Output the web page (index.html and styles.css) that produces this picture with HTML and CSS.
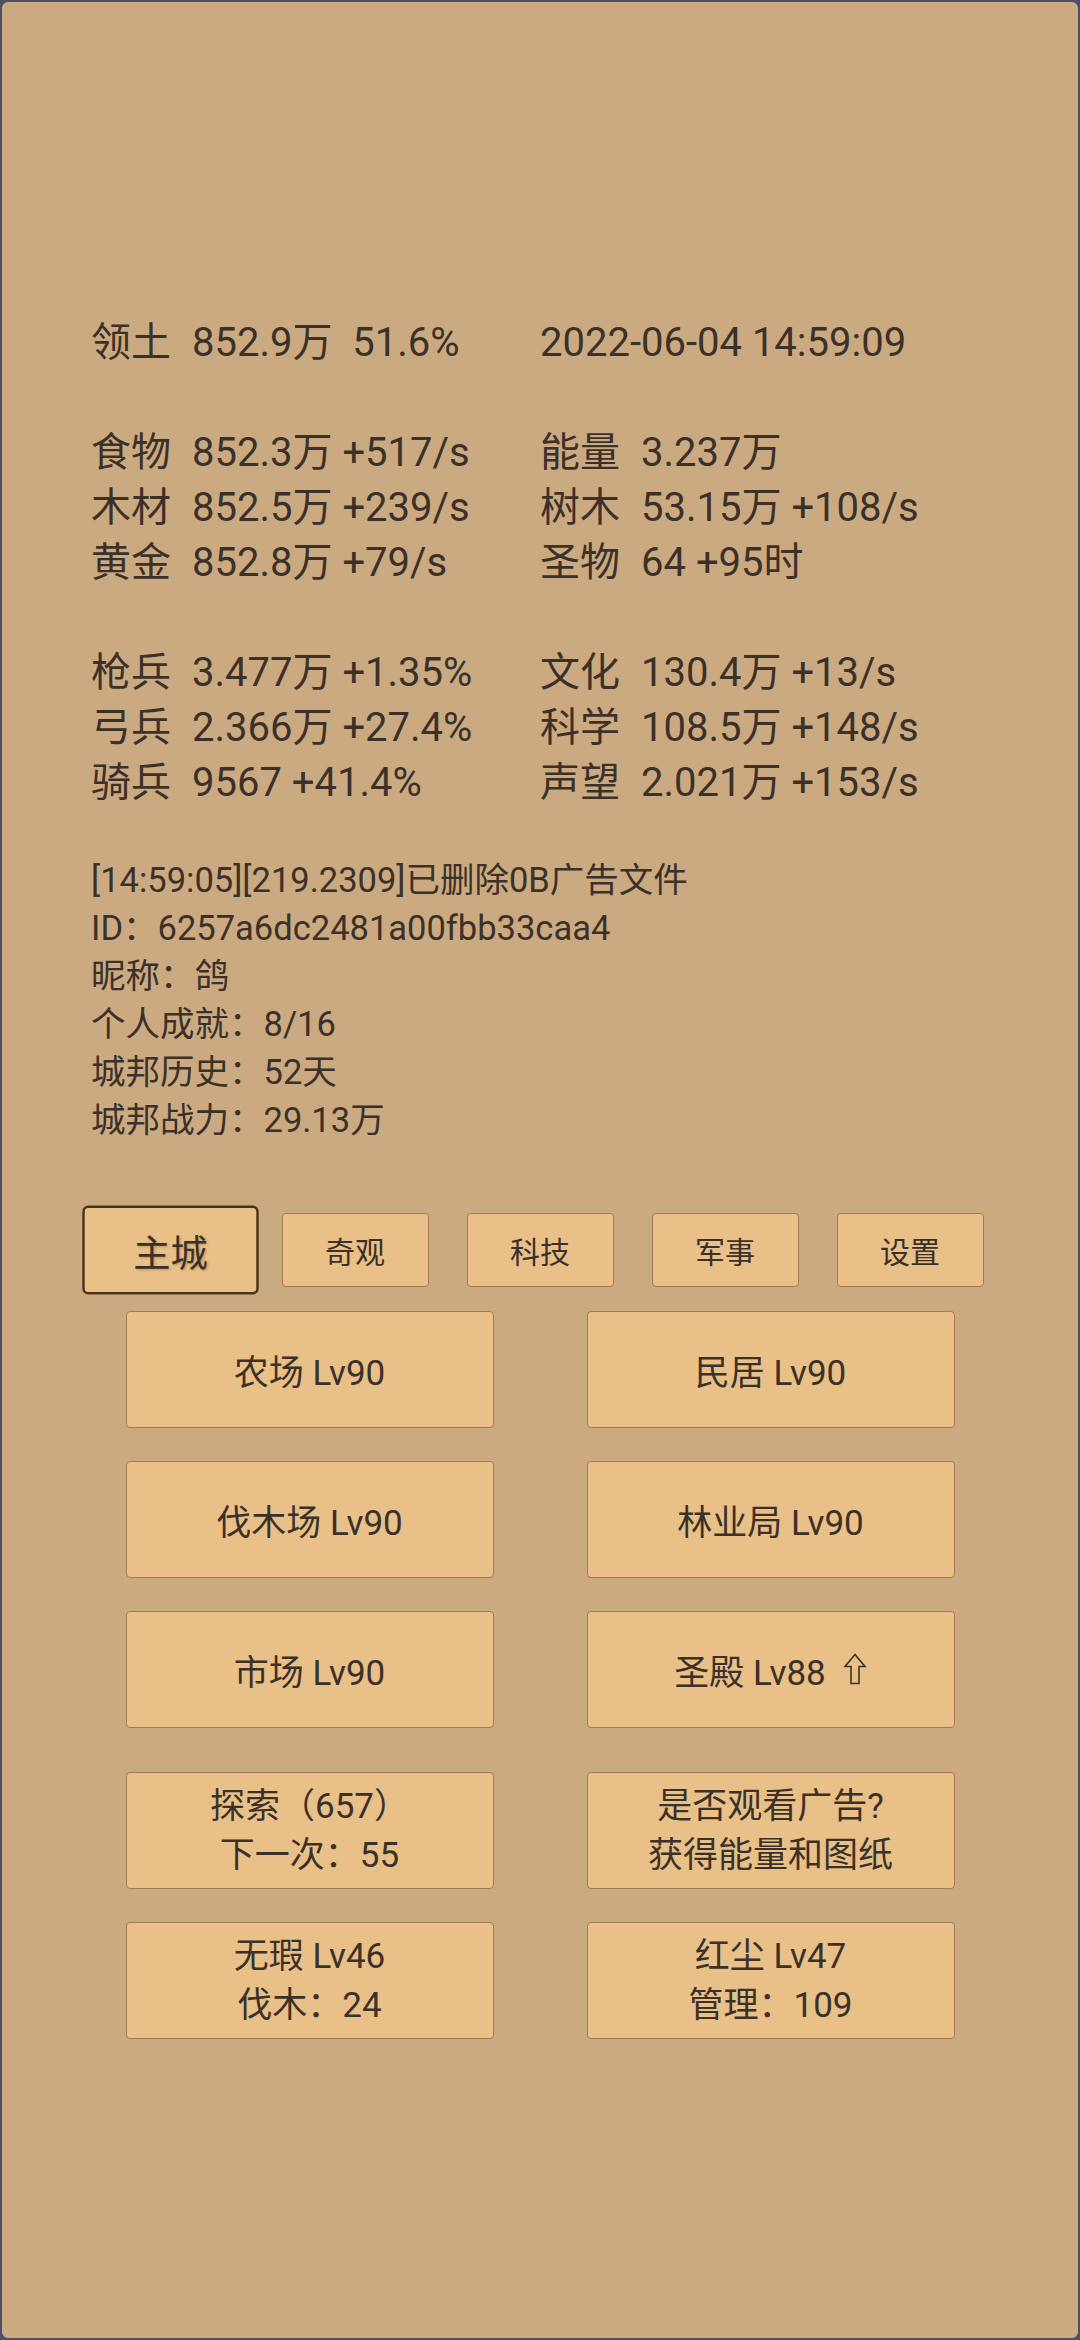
FILE: index.html
```html
<!DOCTYPE html>
<html lang="zh-CN">
<head>
  <meta charset="UTF-8">
  <title>城邦</title>
  <link rel="stylesheet" href="styles.css">
</head>
<body>
<div class="screen">
  <!--资源统计-->
  <div class="stats">
    <div class="group">
      <div class="cell"><span class="k">领土</span><span class="v">852.9万  51.6%</span></div>
      <div class="cell"><span class="v">2022-06-04 14:59:09</span></div>
    </div>
    <div class="group">
      <div class="cell"><span class="k">食物</span><span class="v">852.3万 +517/s</span></div>
      <div class="cell"><span class="k">能量</span><span class="v">3.237万</span></div>
      <div class="cell"><span class="k">木材</span><span class="v">852.5万 +239/s</span></div>
      <div class="cell"><span class="k">树木</span><span class="v">53.15万 +108/s</span></div>
      <div class="cell"><span class="k">黄金</span><span class="v">852.8万 +79/s</span></div>
      <div class="cell"><span class="k">圣物</span><span class="v">64 +95时</span></div>
    </div>
    <div class="group">
      <div class="cell"><span class="k">枪兵</span><span class="v">3.477万 +1.35%</span></div>
      <div class="cell"><span class="k">文化</span><span class="v">130.4万 +13/s</span></div>
      <div class="cell"><span class="k">弓兵</span><span class="v">2.366万 +27.4%</span></div>
      <div class="cell"><span class="k">科学</span><span class="v">108.5万 +148/s</span></div>
      <div class="cell"><span class="k">骑兵</span><span class="v">9567 +41.4%</span></div>
      <div class="cell"><span class="k">声望</span><span class="v">2.021万 +153/s</span></div>
    </div>
  </div>

  <!--日志和信息-->
  <div class="log">
    <p>[14:59:05][219.2309]已删除0B广告文件</p>
    <p>ID：6257a6dc2481a00fbb33caa4</p>
    <p>昵称：鸽</p>
    <p>个人成就：8/16</p>
    <p>城邦历史：52天</p>
    <p>城邦战力：29.13万</p>
  </div>

  <!--标签页-->
  <div class="tabs">
    <span class="tab current">主城</span>
    <span class="tab">奇观</span>
    <span class="tab">科技</span>
    <span class="tab">军事</span>
    <span class="tab">设置</span>
  </div>

  <!--建筑-->
  <div class="grid">
    <div class="btn">农场 Lv90</div>
    <div class="btn">民居 Lv90</div>
    <div class="btn">伐木场 Lv90</div>
    <div class="btn">林业局 Lv90</div>
    <div class="btn">市场 Lv90</div>
    <div class="btn">圣殿 Lv88<svg class="up" width="24" height="32" viewBox="0 0 24 32"><path d="M12 1.5 L22 13.5 L16 13.5 L16 30.5 L8 30.5 L8 13.5 L2 13.5 Z" fill="none" stroke="#3b3129" stroke-width="1.6" stroke-linejoin="miter"/></svg></div>
  </div>

  <div class="grid extra">
    <div class="btn two">探索（657）<br>下一次：55</div>
    <div class="btn two">是否观看广告?<br>获得能量和图纸</div>
    <div class="btn two">无瑕 Lv46<br>伐木：24</div>
    <div class="btn two">红尘 Lv47<br>管理：109</div>
  </div>
</div>
</body>
</html>
```

FILE: styles.css
```css
* {
  margin: 0;
  padding: 0;
  box-sizing: border-box;
}

body {
  background: #4b5069;
  font-family: Roboto, "Noto Sans CJK SC", sans-serif;
  color: #3b3129;
}

.screen {
  height: 2340px;
  border: 2px solid #4b5069;
  border-radius: 8px;
  background-color: #cbaa81;
  padding-top: 313px;
}

/* 资源统计 */
.stats {
  padding-left: 89px;
  font-size: 40px;
  line-height: 55px;
}

.group {
  display: grid;
  grid-template-columns: 449px auto;
}

.group + .group {
  margin-top: 55px;
}

.cell {
  white-space: pre;
}

.k {
  margin-right: 21px;
}

/* 日志 */
.log {
  margin-top: 46px;
  padding-left: 89px;
  font-size: 34.5px;
  line-height: 48px;
}

/* 标签页 */
.tabs {
  display: flex;
  justify-content: center;
  gap: 38px;
  margin-top: 69px;
}

.tab {
  width: 147px;
  height: 74px;
  display: flex;
  align-items: center;
  justify-content: center;
  background-color: #e8c088;
  border: 1px solid #a27c50;
  border-radius: 4px;
  font-size: 30px;
}

.tab.current {
  transform: scale(1.2);
  border: 2px solid #4a3418;
  border-radius: 5px;
  font-size: 31px;
  text-shadow: 1px 1px 2px rgba(40, 25, 10, 0.25);
}

/* 建筑按钮 */
.grid {
  display: grid;
  grid-template-columns: 368px 368px;
  grid-auto-rows: 117px;
  gap: 33px 93px;
  justify-content: center;
  margin-top: 24px;
}

.grid.extra {
  margin-top: 44px;
}

.btn {
  display: flex;
  align-items: center;
  justify-content: center;
  text-align: center;
  background-color: #e8c088;
  border: 1px solid #a27c50;
  border-radius: 4px;
  font-size: 35px;
}

.btn.two {
  line-height: 49px;
}

.up {
  margin-left: 17px;
  margin-top: -2px;
}
```
